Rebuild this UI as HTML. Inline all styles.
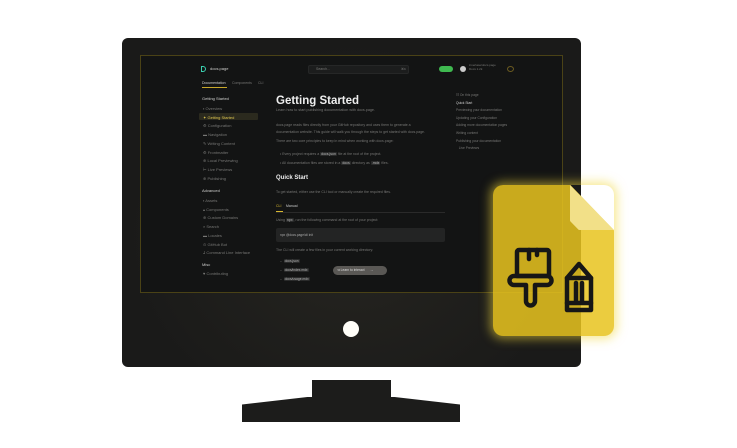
<!DOCTYPE html><html><head><style>
*{margin:0;padding:0;box-sizing:border-box}
body{width:737px;height:448px;background:#fff;position:relative;overflow:hidden;font-family:"Liberation Sans",sans-serif}
.a{position:absolute}
.t{position:absolute;font-size:4px;color:#777775;white-space:nowrap;line-height:5px}
.w{color:#cfcfcd}
.c{background:#2a2b2b;color:#bbb;padding:0 1px;border-radius:1px}
</style></head><body>
<div class="a" style="left:122px;top:38px;width:459px;height:329px;border-radius:6px;background:radial-gradient(ellipse at 50% 60%,#262520,#1a1a19 70%)"></div>
<div class="a" style="left:140px;top:55px;width:423px;height:238px;background:#131414;border:1px solid #4a4216"></div>
<div class="a" style="left:343px;top:321px;width:16px;height:16px;border-radius:50%;background:#fffef8"></div>
<div class="a" style="left:312px;top:380px;width:79px;height:20px;background:#1c1c1b"></div>
<div class="a" style="left:242px;top:397px;width:218px;height:25px;background:#1c1c1b;border-radius:8px 8px 0 0;clip-path:polygon(0 30%,30% 0,70% 0,100% 30%,100% 100%,0 100%)"></div>

<!-- header -->
<div class="a" style="left:201px;top:66px;width:5px;height:6px;border:1.5px solid #3ad0b0;border-radius:0 3px 3px 0"></div>
<div class="t w" style="left:210px;top:66px">docs.page</div>
<div class="a" style="left:308px;top:65px;width:101px;height:9px;background:#1c1d1d;border-radius:2px;border:1px solid #262727"></div>
<div class="t" style="left:316px;top:67px;font-size:3.5px">Search...</div>
<div class="t" style="left:401px;top:67px;font-size:3px">⌘K</div>
<div class="a" style="left:439px;top:66px;width:14px;height:6px;background:#3fb950;border-radius:3px"></div>
<div class="a" style="left:460px;top:66px;width:6px;height:6px;border-radius:50%;background:#ccc"></div>
<div class="t" style="left:469px;top:64px;font-size:3px;line-height:3.5px">invertase/docs.page<br>Docs 1.2k</div>
<div class="a" style="left:507px;top:66px;width:7px;height:6px;border-radius:50%;border:1px solid #6a5a20"></div>
<div class="t w" style="left:202px;top:81px;font-size:3.5px">Documentation</div>
<div class="a" style="left:202px;top:87px;width:25px;height:1px;background:#c8a82a"></div>
<div class="t" style="left:232px;top:81px;font-size:3.5px">Components</div>
<div class="t" style="left:258px;top:81px;font-size:3.5px">CLI</div>

<!-- sidebar -->
<div class="t w" style="left:202px;top:96px">Getting Started</div>
<div class="a" style="left:199px;top:113px;width:59px;height:7px;background:#2b2a1e;border-radius:1px"></div>
<div class="t" style="left:203px;top:105px;line-height:8.7px">▪ Overview<br><span style="color:#e0c850">✦ Getting Started</span><br>⚙ Configuration<br>▬ Navigation<br>✎ Writing Content<br>⚙ Frontmatter<br>⊕ Local Previewing<br>⊢ Live Previews<br>⊕ Publishing</div>
<div class="t w" style="left:202px;top:188px">Advanced</div>
<div class="t" style="left:203px;top:197px;line-height:8.7px">▪ Assets<br>▴ Components<br>⊕ Custom Domains<br>⌕ Search<br>▬ Locales<br>⊙ GitHub Bot<br>⅃ Command Line Interface</div>
<div class="t w" style="left:202px;top:262px">Misc</div>
<div class="t" style="left:203px;top:271px">♥ Contributing</div>

<!-- main -->
<div class="t" style="left:276px;top:95px;font-size:11.5px;line-height:12px;font-weight:bold;color:#eee">Getting Started</div>
<div class="t" style="left:276px;top:108px;font-size:3.7px">Learn how to start publishing documentation with docs.page.</div>
<div class="t" style="left:276px;top:122px;font-size:3.5px;line-height:6.5px">docs.page reads files directly from your GitHub repository and uses them to generate a<br>documentation website. This guide will walk you through the steps to get started with docs.page.</div>
<div class="t" style="left:276px;top:139px;font-size:3.5px">There are two core principles to keep in mind when working with docs.page:</div>
<div class="t" style="left:280px;top:150px;font-size:3.5px;line-height:8.5px">• Every project requires a <span class="c">docs.json</span> file at the root of the project.<br>• All documentation files are stored in a <span class="c">docs</span> directory as <span class="c">.mdx</span> files.</div>
<div class="t" style="left:276px;top:175px;font-size:6px;line-height:7px;font-weight:bold;color:#eee">Quick Start</div>
<div class="t" style="left:276px;top:190px;font-size:3.5px">To get started, either use the CLI tool or manually create the required files.</div>
<div class="t" style="left:276px;top:204px;font-size:3.5px;color:#d8b830">CLI</div>
<div class="t" style="left:286px;top:204px;font-size:3.5px;color:#ccc">Manual</div>
<div class="a" style="left:276px;top:212px;width:169px;height:1px;background:#2a2a2a"></div>
<div class="a" style="left:276px;top:211px;width:7px;height:1px;background:#d8b830"></div>
<div class="t" style="left:276px;top:218px;font-size:3.5px">Using <span class="c">npx</span>, run the following command at the root of your project:</div>
<div class="a" style="left:276px;top:228px;width:169px;height:14px;background:#232424;border-radius:2px"></div>
<div class="t" style="left:280px;top:233px;font-size:3.2px;color:#aaa">npx @docs.page/cli init</div>
<div class="t" style="left:276px;top:248px;font-size:3.5px">The CLI will create a few files in your current working directory:</div>
<div class="t" style="left:280px;top:257px;font-size:3.3px;line-height:9px">–&nbsp; <span class="c">docs.json</span><br>–&nbsp; <span class="c">docs/index.mdx</span><br>–&nbsp; <span class="c">docs/usage.mdx</span></div>
<div class="a" style="left:333px;top:266px;width:54px;height:9px;background:#5a5855;border-radius:5px"></div>
<div class="t" style="left:337px;top:268px;font-size:3.3px;color:#ddd">⊲ Learn to interact&nbsp;&nbsp;&nbsp;&nbsp;&nbsp;&nbsp;→</div>

<!-- toc -->
<div class="t" style="left:456px;top:92px;font-size:3.3px;line-height:7.6px">☷ On this page<br><span style="color:#ccc">Quick Start</span><br>Previewing your documentation<br>Updating your Configuration<br>Adding more documentation pages<br>Writing content<br>Publishing your documentation<br>&nbsp;&nbsp;&nbsp;Live Previews</div>

<!-- doc icon -->
<div class="a" style="left:493px;top:185px;width:121px;height:151px;border-radius:10px;box-shadow:0 0 10px 3px rgba(240,215,60,.55)"></div>
<div class="a" style="left:493px;top:185px;width:121px;height:151px;border-radius:10px;background:rgba(232,196,32,.86);clip-path:polygon(0 0,64% 0,100% 30%,100% 100%,0 100%)"></div>
<div class="a" style="left:570px;top:185px;width:44px;height:45px;background:#f2e088;clip-path:polygon(0 0,100% 100%,20% 100%,0 80%);border-radius:0 0 0 10px"></div>
<svg class="a" style="left:493px;top:185px" width="121" height="151" viewBox="0 0 121 151">
<g fill="none" stroke="#161616" stroke-width="4.5" stroke-linejoin="round" stroke-linecap="round">
<path d="M26 65 h28 a2 2 0 0 1 2 2 v24 h-32 v-24 a2 2 0 0 1 2 -2z"/>
<path d="M24 91 h-3 a4.5 4.5 0 0 0 0 9 h12 v16 a4.5 4.5 0 0 0 9 0 v-16 h12 a4.5 4.5 0 0 0 0 -9z"/>
<path d="M36 65 v9 M44 65 v5"/>
<path d="M74 93 l12 -14 l12 14 v32 h-24z"/>
<path d="M74 93 h24 M83 98 v19 M89 98 v19 M74 118 h24"/>
</g></svg>
</body></html>
